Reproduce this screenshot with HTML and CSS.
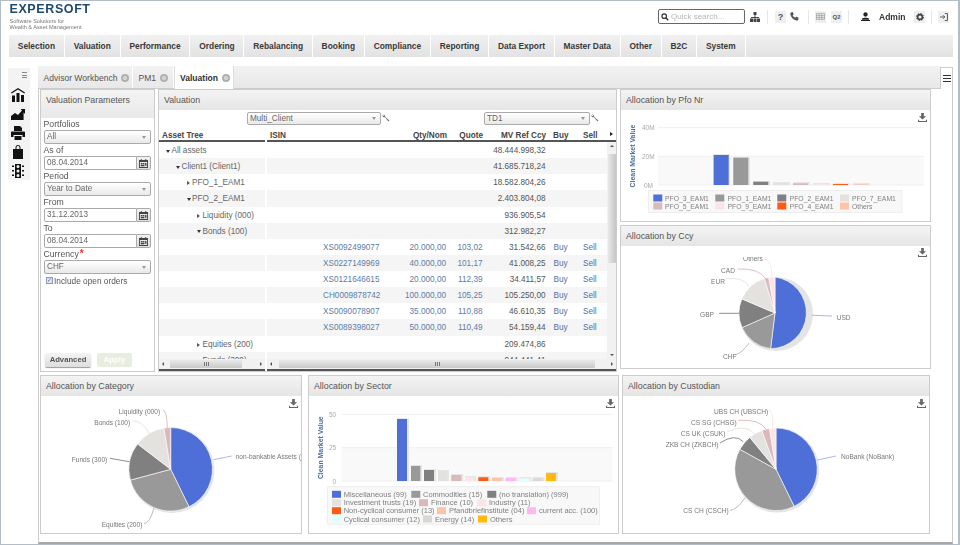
FILE: index.html
```html
<!DOCTYPE html>
<html lang="en">
<head>
<meta charset="utf-8">
<title>Expersoft Valuation</title>
<link rel="stylesheet" href="styles.css">
</head>
<body>
<svg class="defs" width="0" height="0" aria-hidden="true">
  <symbol id="dl" viewBox="0 0 10 10"><path d="M3.500 0h3v3.500H9L5 7.200 1 3.500h2.500z"/><path d="M0 7.600h1.200v1.200h7.600V7.600H10V10H0z"/></symbol>
  <symbol id="wrench" viewBox="0 0 10 10"><path d="M1 .6a2.400 2.400 0 0 1 3 3l5.400 4.600-1.300 1.300L3.500 4.100A2.400 2.400 0 0 1 .5 1.200l1.600 1.300 1-.9z"/></symbol>
  <symbol id="cal" viewBox="0 0 10 10"><path d="M0 1h10v9H0zm1 2.400V9h8V3.400z" fill-rule="evenodd"/><path d="M2 0h1v2H2zM7 0h1v2H7zM2 4.500h2v1.500H2zM4.500 4.500h1.500v1.500H4.500zM6.800 4.500h1.500v3H6.800zM2 6.600h4v1.500H2z"/></symbol>
</svg>
<div class="app">
  <header class="top">
    <div class="logo">
      <div class="logo-name">EXPERSOFT</div>
      <div class="logo-tag">Software Solutions for<br>Wealth &amp; Asset Management</div>
    </div>
    <div class="tools">
      <div class="search">
        <svg class="search-ico" viewBox="0 0 10 10" width="8" height="8"><circle cx="4" cy="4" r="2.800" fill="none" stroke="#333" stroke-width="1.500"/><path d="M6 6l3 3" stroke="#333" stroke-width="1.800"/></svg>
        <span>Quick search...</span>
      </div>
      <svg class="tool org" viewBox="0 0 10 10" width="10" height="10"><path fill="#444" d="M3.500 0h3v3h-3zM0 6.500h3V10H0zM3.500 6.500h3V10h-3zM7 6.500h3V10H7zM1 5h8v1H1zM4.500 3h1v2h-1z"/></svg>
      <i class="sep"></i>
      <span class="tool-btn help">?</span>
      <svg class="tool phone" viewBox="0 0 10 10" width="9" height="9"><path fill="#555" d="M1 .5l2-.5 1.200 2.500-1.200 1c.5 1.300 1.500 2.300 2.800 2.800l1-1.200L9.500 6.500 9 8.800C8.800 9.500 8 9.800 7 9.500 4 8.700 1.300 6 .5 3 .2 2 .4 1 1 .5z"/></svg>
      <i class="sep sep-b"></i>
      <span class="tool-btn grid-btn"><svg viewBox="0 0 10 8" width="9" height="7"><path fill="none" stroke="#999" stroke-width=".8" d="M.4.400h9.200v7.200H.4zM.4 3h9.200M.4 5.300h9.200M3.500.4v7.200M6.500.4v7.200"/></svg></span>
      <span class="tool-btn q2">Q2</span>
      <i class="sep sep-c"></i>
      <svg class="tool person" viewBox="0 0 10 10" width="9" height="9"><circle cx="5" cy="2.800" r="2.400" fill="#222"/><path fill="#222" d="M1 7.500c1-1.500 7-1.500 8 0V8.500H1zM0 9h10v1H0z"/></svg>
      <span class="admin">Admin</span>
      <span class="tool-btn gear"><svg viewBox="0 0 10 10" width="8" height="8"><circle cx="5" cy="5" r="3" fill="none" stroke="#444" stroke-width="2"/><circle cx="5" cy="5" r="4.200" fill="none" stroke="#444" stroke-width="1.400" stroke-dasharray="1.600 1.700"/></svg></span>
      <i class="sep sep-d"></i>
      <span class="tool-btn login"><svg viewBox="0 0 10 10" width="8" height="8"><path fill="none" stroke="#555" stroke-width="1.200" d="M6 .6h3.300v8.800H6M0 5h6M3.800 2.800L6 5 3.800 7.200"/></svg></span>
    </div>
  </header>

  <nav class="menu">
    <a class="menu-item">Selection</a><a class="menu-item">Valuation</a><a class="menu-item">Performance</a><a class="menu-item">Ordering</a><a class="menu-item">Rebalancing</a><a class="menu-item">Booking</a><a class="menu-item">Compliance</a><a class="menu-item">Reporting</a><a class="menu-item">Data Export</a><a class="menu-item">Master Data</a><a class="menu-item">Other</a><a class="menu-item">B2C</a><a class="menu-item">System</a>
  </nav>

  <main class="main">
    <aside class="side">
      <div class="side-burger"><i></i><i></i><i></i></div>
      <svg class="side-ico" viewBox="0 0 14 14" width="14" height="14"><path d="M7 0l7 4.500-.7 1L7 1.500.7 5.500 0 4.500z"/><path d="M1 7.500h3V14H1zM5.500 5h3v9h-3zM10 7h3v7h-3z"/></svg>
      <svg class="side-ico" viewBox="0 0 14 14" width="14" height="14"><path d="M0 13V9l4-3 3 2 4-4.500L9.500 2H14v5l-1.400-1.500V13z"/></svg>
      <svg class="side-ico" viewBox="0 0 14 14" width="14" height="14"><path d="M3 0h6l2 2v3H3zM1 5.500h12c.6 0 1 .4 1 1V11h-2.500V9h-9v2H0V6.500c0-.6.4-1 1-1zM3.500 10h7v4h-7z"/></svg>
      <svg class="side-ico" viewBox="0 0 14 14" width="14" height="14"><path fill-rule="evenodd" d="M2 4h2.500V2.500C4.500 1 5.600 0 7 0s2.500 1 2.500 2.500V4H12v10H2zM5.500 4h3V2.500C8.500 1.600 7.900 1 7 1s-1.500.6-1.500 1.500z"/></svg>
      <svg class="side-ico" viewBox="0 0 14 14" width="14" height="14"><path fill-rule="evenodd" d="M4 0h6v14H4zM7 1a1.500 1.500 0 1 0 0 3 1.500 1.500 0 0 0 0-3zm0 4.500a1.500 1.500 0 1 0 0 3 1.500 1.500 0 0 0 0-3zM7 10a1.500 1.500 0 1 0 0 3 1.500 1.500 0 0 0 0-3z"/><path d="M1 1.500h2v1.500H1zM11 1.500h2v1.500h-2zM1 6h2v1.500H1zM11 6h2v1.500h-2zM1 10.500h2V12H1zM11 10.500h2V12h-2z"/></svg>
    </aside>

    <section class="work">
      <div class="tabrow">
        <div class="tabs">
          <div class="tab tab-a">Advisor Workbench<i class="tab-x"></i></div>
          <div class="tab tab-b">PM1<i class="tab-x"></i></div>
          <div class="tab tab-active">Valuation<i class="tab-x"></i></div>
        </div>
        <div class="tab-menu"><i></i><i></i><i></i></div>
      </div>

      <div class="pane">
        <div class="row-top">
          <section class="panel params">
            <h2 class="panel-head params-head">Valuation Parameters</h2>
            <div class="form">
              <label class="lbl">Portfolios</label>
              <div class="ctl sel">All</div>
              <label class="lbl">As of</label>
              <div class="date"><div class="ctl inp">08.04.2014</div><div class="cal"><svg width="9" height="9"><use href="#cal"/></svg></div></div>
              <label class="lbl">Period</label>
              <div class="ctl sel">Year to Date</div>
              <label class="lbl">From</label>
              <div class="date"><div class="ctl inp">31.12.2013</div><div class="cal"><svg width="9" height="9"><use href="#cal"/></svg></div></div>
              <label class="lbl">To</label>
              <div class="date"><div class="ctl inp">08.04.2014</div><div class="cal"><svg width="9" height="9"><use href="#cal"/></svg></div></div>
              <label class="lbl">Currency<b class="req">*</b></label>
              <div class="ctl sel">CHF</div>
              <div class="check"><i class="box">✓</i>Include open orders</div>
              <div class="actions">
                <span class="btn">Advanced</span>
                <span class="btn btn-off">Apply</span>
              </div>
            </div>
          </section>

          <section class="panel valuation">
            <h2 class="panel-head">Valuation</h2>
            <div class="val-tools">
              <div class="ctl sel vsel vsel-a">Multi_Client</div>
              <svg class="wrench" width="8" height="8"><use href="#wrench"/></svg>
              <div class="ctl sel vsel vsel-b">TD1</div>
              <svg class="wrench" width="8" height="8"><use href="#wrench"/></svg>
            </div>
            <div class="val-grid">
              <div class="tree-pane">
                <div class="col-head tree-title">Asset Tree</div>
                <div class="rows">
                  <div class="t-row l0"><i class="open"></i>All assets</div>
                  <div class="t-row l1"><i class="open"></i>Client1 (Client1)</div>
                  <div class="t-row l2"><i class="closed"></i>PFO_1_EAM1</div>
                  <div class="t-row l2"><i class="open"></i>PFO_2_EAM1</div>
                  <div class="t-row l3"><i class="closed"></i>Liquidity (000)</div>
                  <div class="t-row l3"><i class="open"></i>Bonds (100)</div>
                  <div class="t-row"></div>
                  <div class="t-row"></div>
                  <div class="t-row"></div>
                  <div class="t-row"></div>
                  <div class="t-row"></div>
                  <div class="t-row"></div>
                  <div class="t-row l3"><i class="closed"></i>Equities (200)</div>
                  <div class="t-row l3"><i class="closed"></i>Funds (300)</div>
                </div>
                <div class="hbar hbar-a"><i class="arr-l"></i><b class="thumb"></b><i class="arr-r"></i></div>
              </div>
              <div class="data-pane">
                <div class="col-head data-cols">
                  <span class="h-isin">ISIN</span><span class="num">Qty/Nom</span><span class="num">Quote</span><span class="num">MV Ref Ccy</span><span class="h-buy">Buy</span><span class="h-sell">Sell</span><i class="more"></i>
                </div>
                <div class="data-body">
                  <div class="rows">
                    <div class="d-row"><span></span><span></span><span></span><span class="mv">48.444.998,32</span></div>
                    <div class="d-row"><span></span><span></span><span></span><span class="mv">41.685.718,24</span></div>
                    <div class="d-row"><span></span><span></span><span></span><span class="mv">18.582.804,26</span></div>
                    <div class="d-row"><span></span><span></span><span></span><span class="mv">2.403.804,08</span></div>
                    <div class="d-row"><span></span><span></span><span></span><span class="mv">936.905,54</span></div>
                    <div class="d-row"><span></span><span></span><span></span><span class="mv">312.982,27</span></div>
                    <div class="d-row"><span class="isin">XS0092499077</span><span class="qty">20.000,00</span><span class="qt">103,02</span><span class="mv">31.542,66</span><span class="buy">Buy</span><span class="sell">Sell</span></div>
                    <div class="d-row"><span class="isin">XS0227149969</span><span class="qty">40.000,00</span><span class="qt">101,17</span><span class="mv">41.008,25</span><span class="buy">Buy</span><span class="sell">Sell</span></div>
                    <div class="d-row"><span class="isin">XS0121646615</span><span class="qty">20.000,00</span><span class="qt">112,39</span><span class="mv">34.411,57</span><span class="buy">Buy</span><span class="sell">Sell</span></div>
                    <div class="d-row"><span class="isin">CH0009878742</span><span class="qty">100.000,00</span><span class="qt">105,25</span><span class="mv">105.250,00</span><span class="buy">Buy</span><span class="sell">Sell</span></div>
                    <div class="d-row"><span class="isin">XS0090078907</span><span class="qty">35.000,00</span><span class="qt">110,88</span><span class="mv">46.610,35</span><span class="buy">Buy</span><span class="sell">Sell</span></div>
                    <div class="d-row"><span class="isin">XS0089398027</span><span class="qty">50.000,00</span><span class="qt">110,49</span><span class="mv">54.159,44</span><span class="buy">Buy</span><span class="sell">Sell</span></div>
                    <div class="d-row"><span></span><span></span><span></span><span class="mv">209.474,86</span></div>
                    <div class="d-row"><span></span><span></span><span></span><span class="mv">944.441,41</span></div>
                  </div>
                  <div class="vbar"><i class="arr-u"></i><b class="vthumb"></b><i class="arr-d"></i></div>
                </div>
                <div class="hbar hbar-b"><i class="arr-l"></i><b class="thumb"></b><i class="arr-r"></i></div>
              </div>
            </div>
          </section>

          <div class="right-col">
            <section class="panel pfo">
              <h2 class="panel-head">Allocation by Pfo Nr</h2>
              <div class="chart">
                <svg class="dl" width="9" height="9"><use href="#dl"/></svg>
                <svg class="plot" viewBox="620 110 309 111" width="309" height="111">
                  <rect class="band" x="657" y="156.300" width="266" height="28.700"/>
                  <path class="gridline" d="M657 127.700h266M657 156.300h266M657 185h266"/>
                  <text class="axis-t" transform="translate(631.700 156) rotate(-90)" text-anchor="middle">Clean Market Value</text>
                  <text class="tick" x="641" y="127.700">40M</text><text class="tick" x="641" y="156.300">20M</text><text class="tick" x="643" y="185">0M</text>
                  <rect class="bar-sh" x="712" y="154" width="17" height="31"/><rect class="bar-sh" x="732" y="157" width="17" height="28"/><rect class="bar-sh" x="752" y="181" width="17" height="4"/><rect class="bar-sh" x="772" y="182" width="17" height="3"/><rect class="bar-sh" x="792" y="182" width="17" height="3"/><rect class="bar-sh" x="812" y="183" width="17" height="2"/><rect class="bar-sh" x="832" y="183" width="17" height="2"/><rect class="bar-sh" x="852" y="183" width="17" height="2"/>
                  <rect fill="#4f6fd8" x="712.700" y="155" width="15" height="30"/><rect fill="#999" x="732.300" y="157.700" width="15" height="27.300"/><rect fill="#808080" x="752.300" y="181.700" width="15" height="3.300"/><rect fill="#e4e2df" x="772" y="183" width="15" height="2"/><rect fill="#d9b9b9" x="792" y="183.300" width="15" height="1.700"/><rect fill="#fce4e6" x="812" y="184" width="15" height="1"/><rect fill="#ff5a14" x="832" y="184" width="15" height="1"/><rect fill="#fcc3a9" x="852" y="184.300" width="15" height=".7"/>
                  <rect class="legend-bg" x="647.500" y="190.500" width="253.500" height="22"/>
                  <rect fill="#4f6fd8" x="652.300" y="194.500" width="9" height="7"/><text class="leg leg-s" x="664" y="198">PFO_3_EAM1</text>
                  <rect fill="#999" x="714.300" y="194.500" width="9" height="7"/><text class="leg leg-s" x="726.500" y="198">PFO_1_EAM1</text>
                  <rect fill="#808080" x="776.300" y="194.500" width="9" height="7"/><text class="leg leg-s" x="788.700" y="198">PFO_2_EAM1</text>
                  <rect fill="#e4e2df" x="839" y="194.500" width="9" height="7"/><text class="leg leg-s" x="851" y="198">PFO_7_EAM1</text>
                  <rect fill="#d9b9b9" x="652.300" y="202.500" width="9" height="7"/><text class="leg leg-s" x="664" y="206">PFO_5_EAM1</text>
                  <rect fill="#fce4e6" x="714.300" y="202.500" width="9" height="7"/><text class="leg leg-s" x="726.500" y="206">PFO_9_EAM1</text>
                  <rect fill="#ff5a14" x="776.300" y="202.500" width="9" height="7"/><text class="leg leg-s" x="788.700" y="206">PFO_4_EAM1</text>
                  <rect fill="#fcc3a9" x="839" y="202.500" width="9" height="7"/><text class="leg leg-s" x="851" y="206">Others</text>
                </svg>
              </div>
            </section>
            <section class="panel ccy">
              <h2 class="panel-head">Allocation by Ccy</h2>
              <div class="chart chart-ccy">
                <svg class="dl dl-ccy" width="9" height="9"><use href="#dl"/></svg>
                <svg class="plot" viewBox="620 256 309 112" width="309" height="112">
                  <circle class="pie-sh" cx="775" cy="313" r="37"/>
                  <path class="sl" fill="#4f6fd8" d="M774 312V276A36 36 0 0 1 769.600 347.700Z"/>
                  <path class="sl" fill="#999" d="M774 312L769.600 347.700A36 36 0 0 1 741.100 326.600Z"/>
                  <path class="sl" fill="#808080" d="M774 312L741.100 326.600A36 36 0 0 1 740.900 297.900Z"/>
                  <path class="sl" fill="#e4e2df" d="M774 312L740.900 297.900A36 36 0 0 1 763.500 277.600Z"/>
                  <path class="sl" fill="#d9b9b9" d="M774 312L763.500 277.600A36 36 0 0 1 767.700 276.500Z"/>
                  <path class="sl" fill="#fce4e6" d="M774 312L767.700 276.500A36 36 0 0 1 774 276Z"/>
                  <path class="ld" stroke="#9fb0ea" d="M811 314.300L831 315"/>
                  <path class="ld" stroke="#808080" d="M718.300 312.300H738"/>
                  <path class="ld" stroke="#b5b5b5" d="M734 354Q741 352 748 342"/>
                  <path class="ld" stroke="#e4e2df" d="M725 278Q740 275 748 285"/>
                  <path class="ld" stroke="#d9b9b9" d="M737 268Q758 267 765 278"/>
                  <path class="ld" stroke="#fce4e6" d="M762 258Q771 257 771 276"/>
                  <text class="lb" x="835.700" y="316">USD</text><text class="lb" x="699" y="313">GBP</text><text class="lb" x="722" y="355">CHF</text><text class="lb" x="710" y="280">EUR</text><text class="lb" x="720" y="269">CAD</text><text class="lb" x="742" y="257">Others</text>
                </svg>
              </div>
            </section>
          </div>
        </div>

        <div class="row-bottom">
          <section class="panel cat">
            <h2 class="panel-head">Allocation by Category</h2>
            <div class="chart">
              <svg class="dl dl-b" width="9" height="9"><use href="#dl"/></svg>
              <svg class="plot" viewBox="41 395 260 137" width="260" height="137">
                <circle class="pie-sh" cx="171.700" cy="469.300" r="42.700"/>
                <path class="sl" fill="#4f6fd8" d="M170.700 468.300V426.600A41.700 41.700 0 0 1 189 505.800Z"/>
                <path class="sl" fill="#999" d="M170.700 468.300L189 505.800A41.700 41.700 0 0 1 130.400 479.100Z"/>
                <path class="sl" fill="#808080" d="M170.700 468.300L130.400 479.100A41.700 41.700 0 0 1 137.600 442.900Z"/>
                <path class="sl" fill="#e4e2df" d="M170.700 468.300L137.600 442.900A41.700 41.700 0 0 1 164 427.100Z"/>
                <path class="sl" fill="#d9b9b9" d="M170.700 468.300L164 427.100A41.700 41.700 0 0 1 170.700 426.600Z"/>
                <path class="ld" stroke="#9fb0ea" d="M213.300 458.700L231.700 455"/>
                <path class="ld" stroke="#808080" d="M110 457.300L129.300 460.700"/>
                <path class="ld" stroke="#b5b5b5" d="M144 522.700Q150 522 154 506.700"/>
                <path class="ld" stroke="#e4e2df" d="M132.700 420Q143 420 149.300 432.700"/>
                <path class="ld" stroke="#d9b9b9" d="M162.700 409Q167 409 167.300 427"/>
                <text class="lb" x="118.700" y="410">Liquidity (000)</text><text class="lb" x="94.300" y="421">Bonds (100)</text><text class="lb" x="71.700" y="458">Funds (300)</text><text class="lb" x="101.700" y="523">Equities (200)</text><text class="lb" x="235.700" y="455.700">non-bankable Assets (999)</text>
              </svg>
            </div>
          </section>
          <section class="panel sector">
            <h2 class="panel-head">Allocation by Sector</h2>
            <div class="chart">
              <svg class="dl dl-b" width="9" height="9"><use href="#dl"/></svg>
              <svg class="plot" viewBox="309 395 309 137" width="309" height="137">
                <rect class="band" x="341.700" y="446.700" width="271" height="33.300"/>
                <path class="gridline" d="M341.700 413.300h271M341.700 446.700h271M341.700 480h271"/>
                <text class="axis-t" transform="translate(320 446.700) rotate(-90)" text-anchor="middle">Clean Market Value</text>
                <text class="tick" x="329" y="413.300">50</text><text class="tick" x="329" y="446.700">25</text><text class="tick" x="332.500" y="480">0</text>
                <rect class="bar-sh" x="397" y="417" width="12" height="63"/><rect class="bar-sh" x="411" y="464" width="11" height="16"/><rect class="bar-sh" x="424" y="468" width="12" height="12"/><rect class="bar-sh" x="438" y="469" width="11" height="11"/><rect class="bar-sh" x="451.300" y="473" width="12" height="7"/><rect class="bar-sh" x="465" y="475" width="11" height="5"/><rect class="bar-sh" x="478.300" y="475" width="12" height="5"/><rect class="bar-sh" x="492" y="476" width="12" height="4"/><rect class="bar-sh" x="505.700" y="476" width="12" height="4"/><rect class="bar-sh" x="519.300" y="476" width="12" height="4"/><rect class="bar-sh" x="532.700" y="476" width="12" height="4"/><rect class="bar-sh" x="546" y="471" width="12" height="9"/>
                <rect fill="#4f6fd8" x="397" y="418" width="10" height="62"/><rect fill="#999" x="411" y="465" width="9.300" height="15"/><rect fill="#808080" x="424" y="469" width="10" height="11"/><rect fill="#e4e2df" x="438" y="470" width="9.300" height="10"/><rect fill="#d9b9b9" x="451.300" y="474" width="10" height="6"/><rect fill="#fce4e6" x="465" y="476" width="9.300" height="4"/><rect fill="#ff5a14" x="478.300" y="476.300" width="10" height="3.700"/><rect fill="#fcc3a9" x="492" y="477" width="10" height="3"/><rect fill="#ffb8f0" x="505.700" y="477" width="10" height="3"/><rect fill="#e0ffff" x="519.300" y="477.500" width="10" height="2.500"/><rect fill="#d8d8d4" x="532.700" y="477.500" width="10" height="2.500"/><rect fill="#ffb90f" x="546" y="472" width="10" height="8"/>
                <rect class="legend-bg" x="327.500" y="485.700" width="272" height="37.600"/>
                <rect fill="#4f6fd8" x="332" y="489.800" width="9" height="7"/><text class="leg" x="343.700" y="493.300">Miscellaneous (99)</text>
                <rect fill="#999" x="411.300" y="489.800" width="9" height="7"/><text class="leg" x="423" y="493.300">Commodities (15)</text>
                <rect fill="#808080" x="487.300" y="489.800" width="9" height="7"/><text class="leg" x="499" y="493.300">(no translation) (999)</text>
                <rect fill="#e4e2df" x="332" y="498.200" width="9" height="7"/><text class="leg" x="343.700" y="501.700">Investment trusts (19)</text>
                <rect fill="#d9b9b9" x="419" y="498.200" width="9" height="7"/><text class="leg" x="431" y="501.700">Finance (10)</text>
                <rect fill="#fce4e6" x="477.300" y="498.200" width="9" height="7"/><text class="leg" x="489" y="501.700">Industry (11)</text>
                <rect fill="#ff5a14" x="332" y="506.200" width="9" height="7"/><text class="leg" x="343.700" y="509.700">Non-cyclical consumer (13)</text>
                <rect fill="#fcc3a9" x="437" y="506.200" width="9" height="7"/><text class="leg" x="449" y="509.700">Pfandbriefinstitute (04)</text>
                <rect fill="#ffb8f0" x="527" y="506.200" width="9" height="7"/><text class="leg" x="539" y="509.700">current acc. (100)</text>
                <rect fill="#e0ffff" x="332" y="514.500" width="9" height="7"/><text class="leg" x="343.700" y="518">Cyclical consumer (12)</text>
                <rect fill="#d8d8d4" x="423" y="514.500" width="9" height="7"/><text class="leg" x="435" y="518">Energy (14)</text>
                <rect fill="#ffb90f" x="478" y="514.500" width="9" height="7"/><text class="leg" x="490" y="518">Others</text>
              </svg>
            </div>
          </section>
          <section class="panel cust">
            <h2 class="panel-head">Allocation by Custodian</h2>
            <div class="chart">
              <svg class="dl dl-b" width="9" height="9"><use href="#dl"/></svg>
              <svg class="plot" viewBox="623 395 306 137" width="306" height="137">
                <circle class="pie-sh" cx="777" cy="469.300" r="42.300"/>
                <path class="sl" fill="#4f6fd8" d="M776 468.300V427A41.300 41.300 0 0 1 794.100 505.400Z"/>
                <path class="sl" fill="#999" d="M776 468.300L794.100 505.400A41.300 41.300 0 0 1 739.900 448.300Z"/>
                <path class="sl" fill="#808080" d="M776 468.300L739.900 448.300A41.300 41.300 0 0 1 749.800 436.400Z"/>
                <path class="sl" fill="#e4e2df" d="M776 468.300L749.800 436.400A41.300 41.300 0 0 1 761.900 429.500Z"/>
                <path class="sl" fill="#d9b9b9" d="M776 468.300L761.900 429.500A41.300 41.300 0 0 1 769.500 427.500Z"/>
                <path class="sl" fill="#fce4e6" d="M776 468.300L769.500 427.500A41.300 41.300 0 0 1 776 427Z"/>
                <path class="ld" stroke="#9fb0ea" d="M817.300 459L836 455"/>
                <path class="ld" stroke="#b5b5b5" d="M730 509.300Q737 509 745 496.700"/>
                <path class="ld" stroke="#808080" d="M720 442Q735 432 743.300 440.700"/>
                <path class="ld" stroke="#e4e2df" d="M727.300 430.700Q746 422 755 433.300"/>
                <path class="ld" stroke="#d9b9b9" d="M738.300 419.300Q760 418 766 428.300"/>
                <path class="ld" stroke="#fce4e6" d="M768.300 408.300Q773 408 772.700 427.300"/>
                <text class="lb" x="841" y="455.700">NoBank (NoBank)</text><text class="lb" x="683.300" y="509.700">CS CH (CSCH)</text><text class="lb" x="665.700" y="443">ZKB CH (ZKBCH)</text><text class="lb" x="680.700" y="432">CS UK (CSUK)</text><text class="lb" x="691" y="421">CS SG (CHSG)</text><text class="lb" x="714" y="410">UBS CH (UBSCH)</text>
              </svg>
            </div>
          </section>
        </div>
      </div>
    </section>
  </main>
</div>
</body>
</html>
```

FILE: styles.css
```css
* { box-sizing: border-box; }
html, body { margin: 0; padding: 0; background: #fff; }
body { font-family: "Liberation Sans", Arial, sans-serif; color: #666; overflow: hidden; }
.defs { position: absolute; }
.app { width: 960px; height: 545px; border: 1px solid #b4bcc8; border-right-width: 2px; overflow: hidden; display: flex; flex-direction: column; filter: blur(.3px); }

.top { height: 34px; display: flex; justify-content: space-between; }
.logo { margin: 3px 0 0 8.500px; }
.logo-name { font-size: 12.500px; line-height: 11px; font-weight: 700; letter-spacing: .6px; color: #1f4a6e; }
.logo-tag { font-size: 5.600px; line-height: 6px; margin-top: 3px; color: #777; }
.tools { display: flex; align-items: center; height: 31px; padding-right: 9px; }
.search { width: 87px; height: 15px; border: 1px solid #666; border-radius: 2px; display: flex; align-items: center; font-size: 8px; color: #b5b5b5; padding-left: 2px; }
.search-ico { margin-right: 2px; }
.tool { display: block; flex: none; }
.org { margin-left: 5px; }
.sep { width: 1px; height: 14px; background: #e6e6e6; margin-left: 7px; }
.tool-btn { width: 11px; height: 12px; background: #efefef; display: flex; align-items: center; justify-content: center; flex: none; }
.help { margin-left: 7px; font-size: 9px; font-weight: 700; color: #555; }
.phone { margin-left: 4px; }
.sep-b { margin-left: 9px; }
.grid-btn { margin-left: 6px; }
.q2 { margin-left: 5px; font-size: 6px; font-weight: 700; color: #555; }
.sep-c { margin-left: 6px; }
.person { margin-left: 12px; }
.admin { margin-left: 9px; font-size: 8.500px; font-weight: 700; color: #333; width: 28px; }
.gear { margin-left: 7px; }
.sep-d { margin-left: 6px; }
.login { margin-left: 6px; }

.menu { height: 22px; margin: 0 5px 0 8px; display: flex; background: linear-gradient(#f1f1f1, #e2e2e2); }
.menu-item { display: flex; align-items: center; padding: 0 8.800px; font-size: 8.400px; font-weight: 700; color: #3a3a3a; border-right: 1px solid #fff; white-space: nowrap; }

.main { flex: 1; display: flex; padding-top: 9px; min-height: 0; }
.side { width: 22px; height: 112px; margin: 2px 8px 0 7px; background: #f3f3f3; display: flex; flex-direction: column; align-items: center; gap: 5px; padding-top: 4px; }
.side-burger { align-self: flex-end; margin: 0 3px 5px 0; display: flex; flex-direction: column; gap: 1.500px; }
.side-burger i { display: block; width: 5px; height: 1px; background: #888; }
.side-ico { display: block; fill: #111; flex: none; margin-right: 3px; }

.work { width: 915px; display: flex; flex-direction: column; }
.tabrow { height: 23px; display: flex; }
.tabs { width: 902px; display: flex; background: linear-gradient(#f2f2f2, #e8e8e8); border-bottom: 1px solid #ccc; }
.tab { display: flex; align-items: center; font-size: 8.550px; color: #555; border-right: 1px solid #fff; height: 22px; padding: 1px 0 0 5.500px; }
.tab-a { width: 95px; }
.tab-b { width: 41px; }
.tab-active { width: 60px; background: #fff; height: 23px; border: 1px solid #ddd; border-width: 0 1px; color: #333; font-weight: 700; margin-bottom: -1px; padding-left: 5px; }
.tab-x { width: 8px; height: 8px; border-radius: 50%; background: #c4c4c4; border: 2px solid #b0b0b0; box-shadow: inset 0 0 0 1px #e8e8e8; margin-left: 4px; flex: none; }
.tab-menu { width: 13px; margin-top: 1px; background: #fff; border: 1px solid #ccc; border-bottom: 0; display: flex; flex-direction: column; justify-content: center; align-items: center; gap: 2px; }
.tab-menu i { display: block; width: 8px; height: 1px; background: #333; }

.pane { flex: 1; border: 1px solid #ccc; border-top: 0; border-bottom: 2px solid #a8a8a8; padding: 0 1px; }
.row-top { display: flex; height: 283px; gap: 3px; }
.row-bottom { display: flex; height: 158.500px; margin-top: 3px; }
.panel { border: 1px solid #ccc; background: #fff; display: flex; flex-direction: column; overflow: hidden; flex: none; }
.panel-head { margin: 0; height: 19.500px; flex: none; display: flex; align-items: center; padding-left: 5px; font-size: 8.800px; font-weight: 400; color: #555; background: linear-gradient(#f4f4f4, #e5e5e5); }
.chart { position: relative; flex: 1; min-height: 0; }
.plot { display: block; }
.dl { position: absolute; right: 3px; top: 3px; fill: #666; z-index: 1; }
.chart-ccy { padding-top: 11px; }
.dl-ccy { top: 2px; }

.params { width: 115px; }
.params-head { height: 28px; align-items: flex-start; padding-top: 5px; background: linear-gradient(#f4f4f4, #e8e8e8); }
.form { flex: 1; padding: 0 3px 0 2.500px; display: flex; flex-direction: column; position: relative; }
.lbl { height: 12px; line-height: 13px; font-size: 8.700px; color: #555; }
.req { color: #e33; margin-left: 1px; font-size: 10px; line-height: 8px; }
.ctl { height: 14px; border: 1px solid #aaa; border-radius: 2px; font-size: 8.200px; line-height: 12px; color: #666; padding-left: 2.500px; white-space: nowrap; }
.sel { position: relative; background: linear-gradient(#fff, #e9e9e9); }
.sel::after { content: ""; position: absolute; right: 4px; top: 4.500px; border: 2.500px solid transparent; border-top: 3px solid #999; border-bottom: 0; }
.date { display: flex; height: 14px; }
.inp { flex: 1; background: #fff; border-radius: 2px 0 0 2px; }
.cal { width: 14px; height: 14px; background: linear-gradient(#f2f2f2, #ddd); border: 1px solid #aaa; border-left: 0; border-radius: 0 2px 2px 0; display: flex; align-items: center; justify-content: center; fill: #444; }
.check { display: flex; align-items: center; font-size: 8.300px; height: 13px; color: #555; padding-left: 2px; }
.box { width: 7px; height: 7px; border: 1px solid #8a9ab8; background: #dfe6f2; font-size: 6px; line-height: 5px; font-style: normal; color: #4b6fa5; margin-right: 1.500px; flex: none; }
.actions { position: absolute; left: 4px; top: 234.500px; display: flex; gap: 6px; }
.btn { height: 14px; width: 46px; border-radius: 2px; background: linear-gradient(#f4f4f4, #ddd); box-shadow: 0 1px 1px #999; font-size: 7.700px; font-weight: 700; color: #555; display: flex; align-items: center; justify-content: center; }
.btn-off { width: 35px; background: #e7eee0; box-shadow: none; color: #fff; }

.valuation { width: 459px; }
.val-tools { height: 18.500px; flex: none; display: flex; align-items: center; padding: 0 0 1px 88px; }
.vsel { width: 133.500px; height: 13px; line-height: 11px; padding-left: 2px; }
.vsel::after { top: 4px; }
.vsel-b { width: 105.500px; margin-left: 94px; }
.wrench { margin-left: 1.500px; fill: #777; flex: none; }
.val-grid { flex: 1; display: flex; min-height: 0; }
.tree-pane { width: 106px; display: flex; flex-direction: column; flex: none; }
.data-pane { flex: 1; min-width: 0; display: flex; flex-direction: column; margin-left: 2px; }
.col-head { height: 14px; flex: none; border-bottom: 2px solid #555; font-size: 8.200px; font-weight: 700; color: #444; line-height: 15px; }
.tree-title { padding-left: 3px; }
.data-cols, .d-row { display: grid; grid-template-columns: 113px 68px 36px 63px 31px 28px; }
.data-cols { position: relative; }
.h-isin { padding-left: 3px; }
.num { text-align: right; padding-right: 1px; }
.h-buy { padding-left: 6px; }
.h-sell { padding-left: 5px; }
.more { position: absolute; right: 3px; top: 4px; border: 2.500px solid transparent; border-left: 3.500px solid #222; border-right: 0; }
.rows { flex: 1; min-height: 0; min-width: 0; overflow: hidden; font-size: 8.200px; color: #666; }
.t-row, .d-row { height: 16.140px; line-height: 18px; white-space: nowrap; }
.t-row:nth-child(even), .d-row:nth-child(even) { background: #f5f5f5; }
.t-row { display: flex; align-items: center; padding-top: 2px; }
.l0 { padding-left: 7px; }
.l1 { padding-left: 17px; }
.l2 { padding-left: 27.500px; }
.l3 { padding-left: 38px; }
.open { border: 2px solid transparent; border-top: 3px solid #333; border-bottom: 0; margin-right: 1.500px; flex: none; }
.closed { border: 2px solid transparent; border-left: 3px solid #555; border-right: 0; margin-right: 2.500px; flex: none; }
.d-row > span:nth-child(2), .d-row > span:nth-child(3) { text-align: right; }
.isin { padding-left: 56px; color: #5d7ca8; }
.qty { color: #5d7ca8; padding-right: 2px; }
.qt { color: #5d7ca8; padding-right: 1.500px; }
.mv { grid-column: 4; text-align: right; padding-right: 1.500px; color: #555; }
.buy { color: #4e70a8; padding-left: 6.500px; }
.sell { color: #4e70a8; padding-left: 5px; }
.data-body { flex: 1; display: flex; min-height: 0; }
.vbar { width: 9px; flex: none; background: #f1f1f1; display: flex; flex-direction: column; align-items: center; }
.vthumb { width: 8px; height: 109px; margin-top: 7px; border-radius: 1px; background: linear-gradient(90deg, #e8e8e8, #c6c6c6); }
.arr-u { border: 2px solid transparent; border-bottom: 2.500px solid #555; border-top: 0; margin-top: 3px; }
.arr-d { border: 2px solid transparent; border-top: 2.500px solid #555; border-bottom: 0; margin-top: auto; margin-bottom: 3px; }
.hbar { height: 12px; flex: none; background: #f1f1f1; border-bottom: 2px solid #555; display: flex; align-items: center; padding: 0 3px; }
.thumb { height: 8px; border-radius: 1px; background: linear-gradient(#e9e9e9, #c9c9c9); display: flex; align-items: center; justify-content: center; }
.thumb::before { content: ""; width: 5px; height: 4px; background: repeating-linear-gradient(90deg, #777 0 1px, transparent 1px 2px); }
.hbar-a .thumb { width: 72px; margin-left: 6px; }
.hbar-b .thumb { width: 316px; margin-left: 7px; }
.arr-l { border: 2px solid transparent; border-right: 2.500px solid #555; border-left: 0; }
.arr-r { border: 2px solid transparent; border-left: 2.500px solid #555; border-right: 0; margin-left: auto; }

.right-col { width: 311px; display: flex; flex-direction: column; gap: 3px; flex: none; }
.pfo { height: 133px; }
.ccy { height: 144px; }
.cat { width: 262px; }
.sector { width: 310.500px; margin-left: 6px; }
.cust { width: 308px; margin-left: 3.500px; }

.band { fill: #f9f9f9; }
.gridline { stroke: #efefef; stroke-width: 1; fill: none; }
.axis-t { font-size: 6.900px; font-weight: 700; fill: #4a6c9e; dominant-baseline: central; }
.tick { font-size: 6.500px; fill: #aaa; dominant-baseline: central; }
.bar-sh { fill: #e6e6e6; }
.legend-bg { fill: #f8f8f8; stroke: #eee; }
.leg { font-size: 7.500px; fill: #808080; dominant-baseline: central; }
.leg-s { font-size: 6.800px; }
.pie-sh { fill: #e4e4e4; }
.sl { stroke: #fff; stroke-width: .6; }
.ld { fill: none; stroke-width: .9; }
.lb { font-size: 6.600px; fill: #777; dominant-baseline: central; }
```
